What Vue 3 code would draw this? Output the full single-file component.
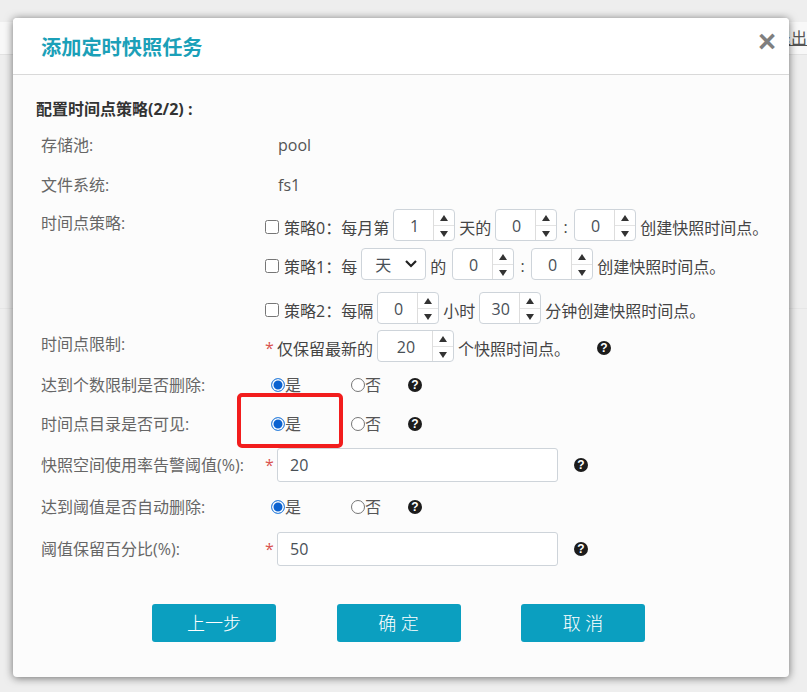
<script setup>
const buttons = ['上一步', '确 定', '取 消']
</script>

<template>
  <div class="page">
    <div class="behind">
      <div class="topbar"><span class="logout">退出</span></div>
      <div class="rule"></div>
    </div>

    <div class="modal">
      <header class="head">
        <h3>添加定时快照任务</h3>
        <span class="close">×</span>
      </header>

      <div class="body">
        <h4>配置时间点策略(2/2) :</h4>

        <div class="row r-pool">
          <label>存储池:</label>
          <div class="val plain">pool</div>
        </div>
        <div class="row r-fs">
          <label>文件系统:</label>
          <div class="val plain">fs1</div>
        </div>

        <div class="row r-policy">
          <label>时间点策略:</label>
          <div class="val stack">
            <div class="line l0">
              <input type="checkbox" class="chk" />
              <span>策略0：每月第</span>
              <span class="spin w62"><b>1</b><i class="arrows"><em class="up"></em><em class="down"></em></i></span>
              <span>天的</span>
              <span class="spin w62"><b>0</b><i class="arrows"><em class="up"></em><em class="down"></em></i></span>
              <span class="colon">:</span>
              <span class="spin w62"><b>0</b><i class="arrows"><em class="up"></em><em class="down"></em></i></span>
              <span>创建快照时间点。</span>
            </div>
            <div class="line l1">
              <input type="checkbox" class="chk" />
              <span>策略1：每</span>
              <span class="select">天<svg width="14" height="10" viewBox="0 0 14 10"><path d="M2 2l5 5 5-5" fill="none" stroke="#222" stroke-width="2.2"/></svg></span>
              <span class="de">的</span>
              <span class="spin w62"><b>0</b><i class="arrows"><em class="up"></em><em class="down"></em></i></span>
              <span class="colon">:</span>
              <span class="spin w62"><b>0</b><i class="arrows"><em class="up"></em><em class="down"></em></i></span>
              <span>创建快照时间点。</span>
            </div>
            <div class="line l2">
              <input type="checkbox" class="chk" />
              <span>策略2：每隔</span>
              <span class="spin w62"><b>0</b><i class="arrows"><em class="up"></em><em class="down"></em></i></span>
              <span>小时</span>
              <span class="spin w62"><b>30</b><i class="arrows"><em class="up"></em><em class="down"></em></i></span>
              <span>分钟创建快照时间点。</span>
            </div>
          </div>
        </div>

        <div class="row r-limit">
          <label>时间点限制:</label>
          <div class="val line">
            <span class="star">*</span>
            <span>仅保留最新的</span>
            <span class="spin w78"><b>20</b><i class="arrows"><em class="up"></em><em class="down"></em></i></span>
            <span>个快照时间点。</span>
            <span class="help ml">?</span>
          </div>
        </div>

        <div class="row r-a">
          <label>达到个数限制是否删除:</label>
          <div class="val radios">
            <span class="radio on">是</span><span class="radio">否</span><span class="help">?</span>
          </div>
        </div>
        <div class="row r-b">
          <label>时间点目录是否可见:</label>
          <div class="val radios">
            <span class="radio on">是</span><span class="radio">否</span><span class="help">?</span>
            <span class="mark"></span>
          </div>
        </div>
        <div class="row r-c">
          <label>快照空间使用率告警阈值(%):</label>
          <div class="val field">
            <span class="star">*</span>
            <span class="text">20</span>
            <span class="help">?</span>
          </div>
        </div>
        <div class="row r-d">
          <label>达到阈值是否自动删除:</label>
          <div class="val radios">
            <span class="radio on">是</span><span class="radio">否</span><span class="help">?</span>
          </div>
        </div>
        <div class="row r-e">
          <label>阈值保留百分比(%):</label>
          <div class="val field">
            <span class="star">*</span>
            <span class="text">50</span>
            <span class="help">?</span>
          </div>
        </div>

        <div class="actions">
          <button v-for="b in buttons" :key="b">{{ b }}</button>
        </div>
      </div>
    </div>
  </div>
</template>

<style>
html, body { margin: 0; background: #eeeeee; }
</style>

<style scoped>
.page {
  position: relative;
  width: 807px;
  height: 692px;
  overflow: hidden;
  background: #eeeeee;
  color: #555;
  font-family: "Open Sans", "Noto Sans CJK SC", sans-serif;
  font-size: 16px;
}

.behind { position: absolute; inset: 0; }
.topbar {
  height: 32px;
  margin-top: 22px;
  background: #f8f8f8;
  border-bottom: 1px solid #e2e2e2;
  text-align: right;
  line-height: 32px;
  white-space: nowrap;
  overflow: hidden;
}
.logout {
  display: inline-block;
  font-size: 16px;
  color: #555;
  text-decoration: underline;
}
.rule { margin-top: 253px; height: 1px; background: #e6e6e6; }

.modal {
  position: absolute;
  left: 13px;
  top: 18px;
  width: 776px;
  height: 659px;
  background: #fcfcfc;
  border-radius: 4px;
  box-shadow: 0 1px 8px rgba(0, 0, 0, 0.55);
}

.head {
  height: 57px;
  box-sizing: border-box;
  background: #fff;
  border-bottom: 1px solid #d9d9d9;
  border-radius: 4px 4px 0 0;
  padding: 14px 13px 0 28px;
  display: flex;
  justify-content: space-between;
  align-items: flex-start;
}
.head h3 {
  margin: 0;
  font-size: 20.2px;
  line-height: 30px;
  font-weight: 700;
  color: #1ba0b8;
}
.close {
  font-family: "Liberation Sans", sans-serif;
  font-size: 31px;
  line-height: 24px;
  margin-top: -2px;
  font-weight: 700;
  color: #7f7f7f;
}

.body { padding: 23px 0 0 23px; }
.body h4 {
  margin: 0;
  font-size: 16px;
  line-height: 22px;
  font-weight: 700;
  color: #333;
}

.row { display: flex; margin-left: 5px; }
.row label { width: 224px; flex: none; line-height: 22px; color: #666; }
.val { color: #444; }
.plain { margin-left: 13px; font-size: 16px; line-height: 22px; color: #555; }

.r-pool { margin-top: 14px; }
.r-fs { margin-top: 18px; }
.r-policy { margin-top: 13px; }
.r-policy label, .r-limit label { margin-top: 3px; }
.r-limit { margin-top: 2px; }
.r-a { margin-top: 8px; }
.r-b { margin-top: 17px; }
.r-c { margin-top: 13px; align-items: center; }
.r-d { margin-top: 14px; }
.r-e { margin-top: 14px; align-items: center; }

.stack { display: flex; flex-direction: column; }
.line { display: flex; align-items: center; gap: 4px; height: 36px; white-space: nowrap; }
.l1 { margin-top: 3px; }
.l2 { margin-top: 8px; }
.colon { width: 9px; text-align: center; }
.de { margin-right: 2px; }

.chk {
  width: 14px;
  height: 14px;
  margin: 0 1px 0 0;
}

.spin {
  display: inline-flex;
  height: 32px;
  margin-bottom: 4px;
  box-sizing: border-box;
  border: 1px solid #ced4da;
  border-radius: 4px;
  background: #fff;
}
.w62 { width: 62px; }
.w78 { width: 77px; }
.spin b {
  flex: 1;
  padding-left: 2px;
  font-weight: 400;
  font-size: 16px;
  line-height: 33px;
  text-align: center;
  color: #495057;
}
.arrows {
  width: 21px;
  box-sizing: border-box;
  flex: none;
  border-left: 1px solid #ddd;
  display: flex;
  flex-direction: column;
}
.arrows em {
  flex: 1;
  position: relative;
}
.arrows .up { border-bottom: 1px solid #e3e3e3; }
.arrows em::after {
  content: "";
  position: absolute;
  left: 6px;
  top: 5px;
  border-left: 4px solid transparent;
  border-right: 4px solid transparent;
}
.arrows .up::after { border-bottom: 6px solid #333; }
.arrows .down::after { border-top: 6px solid #333; }

.select {
  width: 65px;
  height: 32px;
  margin-bottom: 4px;
  box-sizing: border-box;
  border: 1px solid #ced4da;
  border-radius: 4px;
  background: #fff;
  display: inline-flex;
  align-items: center;
  justify-content: space-between;
  padding: 0 7px 0 13px;
  font-size: 16px;
  color: #495057;
}

.star { color: #d9534f; width: 8px; }
.help {
  width: 14px;
  height: 14px;
  border-radius: 50%;
  background: #1c1c1c;
  color: #fff;
  font-family: "Liberation Sans", sans-serif;
  font-size: 12px;
  font-weight: 700;
  line-height: 14px;
  text-align: center;
}
.ml { margin-left: 23px; }

.radios {
  position: relative;
  display: flex;
  align-items: center;
  height: 22px;
  margin-left: 6px;
}
.radio {
  position: relative;
  width: 80px;
  padding-left: 14px;
  box-sizing: border-box;
  line-height: 22px;
  color: #555;
}
.radio::before {
  content: "";
  position: absolute;
  left: 0;
  top: 4px;
  width: 14px;
  height: 14px;
  box-sizing: border-box;
  border: 1px solid #767676;
  border-radius: 50%;
  background: #fff;
}
.radio.on::before {
  border: 1px solid #3f8ce0;
  box-shadow: inset 0 0 0 1.5px #fff;
  background: #0b62d0;
}
.radios .help { margin-left: -23px; }
.mark {
  position: absolute;
  left: -34px;
  top: -20px;
  width: 106px;
  height: 55px;
  box-sizing: border-box;
  border: 4px solid #f21d1d;
  border-radius: 5px;
  pointer-events: none;
}

.field { display: flex; align-items: center; height: 34px; position: relative; }
.field .star { width: 12px; }
.field .text {
  width: 281px;
  height: 34px;
  box-sizing: border-box;
  border: 1px solid #ced4da;
  border-radius: 3px;
  background: #fff;
  padding-left: 12px;
  font-size: 16px;
  line-height: 32px;
  color: #495057;
}
.field .help { margin-left: 16px; }

.actions {
  display: flex;
  margin: 38px 0 0 116px;
  gap: 60.5px;
}
.actions button {
  width: 124px;
  height: 38px;
  padding-bottom: 3px;
  border: 0;
  border-radius: 3px;
  background: #0b9fc0;
  color: #fff;
  font-family: inherit;
  font-size: 18px;
  font-weight: 300;
}
</style>
